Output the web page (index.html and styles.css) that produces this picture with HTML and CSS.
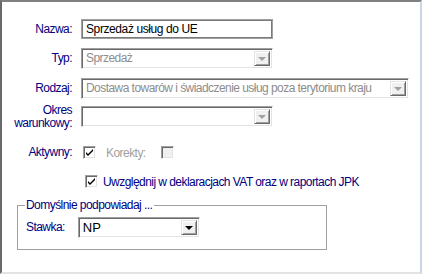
FILE: index.html
```html
<!DOCTYPE html>
<html lang="pl">
<head>
  <meta charset="UTF-8">
  <title>Rejestr VAT</title>
  <link rel="stylesheet" href="styles.css">
</head>
<body>
  <div class="window">
    <div class="row row-nazwa">
      <label class="label">Nazwa:</label>
      <div class="edit w-short">Sprzedaż usług do UE</div>
    </div>

    <div class="row row-typ">
      <label class="label">Typ:</label>
      <div class="combo disabled w-short">
        <span class="combo-text">Sprzedaż</span>
        <span class="combo-btn"><span class="arrow"></span></span>
      </div>
    </div>

    <div class="row row-rodzaj">
      <label class="label">Rodzaj:</label>
      <div class="combo disabled w-long">
        <span class="combo-text">Dostawa towarów i świadczenie usług poza terytorium kraju</span>
        <span class="combo-btn"><span class="arrow"></span></span>
      </div>
    </div>

    <div class="row row-okres">
      <label class="label two-line">Okres<br>warunkowy:</label>
      <div class="combo disabled w-short">
        <span class="combo-text"></span>
        <span class="combo-btn"><span class="arrow"></span></span>
      </div>
    </div>

    <div class="row row-aktywny">
      <label class="label">Aktywny:</label>
      <span class="check checked">
        <svg width="9" height="9" viewBox="0 0 9 9"><path d="M1 4 L3 6 L8 1 L8 3 L3 8 L1 6 Z" fill="#000"/></svg>
      </span>
      <span class="korekty">Korekty:</span>
      <span class="check greyed"></span>
    </div>

    <div class="row row-vat">
      <span class="check checked">
        <svg width="9" height="9" viewBox="0 0 9 9"><path d="M1 4 L3 6 L8 1 L8 3 L3 8 L1 6 Z" fill="#000"/></svg>
      </span>
      <span class="check-label">Uwzględnij w deklaracjach VAT oraz w raportach JPK</span>
    </div>

    <fieldset class="group">
      <legend>Domyślnie podpowiadaj ...</legend>
      <div class="row row-stawka">
        <label class="label label-stawka">Stawka:</label>
        <div class="combo w-stawka">
          <span class="combo-text big">NP</span>
          <span class="combo-btn"><span class="arrow"></span></span>
        </div>
      </div>
    </fieldset>
  </div>
</body>
</html>
```

FILE: styles.css
```css
* {
  margin: 0;
  padding: 0;
  box-sizing: border-box;
}
body {
  background: #fff;
  font-family: 'Liberation Sans', Arial, sans-serif;
  font-size: 12px;
  letter-spacing: -0.55px;
}
.window {
  width: 422px;
  height: 274px;
  background: #fff;
  border-top: 2px solid #808080;
  border-left: 2px solid #696969;
  border-right: 2px solid #c9d5e3;
  border-bottom: 2px solid #e3e3e3;
  padding-top: 17px;
  overflow: hidden;
}
.row {
  display: flex;
  align-items: center;
}
.label {
  width: 70px;
  margin-right: 9px;
  text-align: right;
  color: #000080;
  line-height: 13px;
}
.row-nazwa { height: 20px; }
.row-typ { height: 21px; margin-top: 9px; }
.row-rodzaj { height: 21px; margin-top: 9px; }
.row-okres { height: 21px; margin-top: 7px; }
.row-aktywny { height: 13px; margin-top: 19px; }
.row-vat { height: 13px; margin-top: 16px; padding-left: 81px; }

.edit {
  height: 20px;
  border: 1px solid #a0a0a0;
  box-shadow: inset 0 0 0 1px #7a7a7a;
  padding: 0 4px;
  line-height: 18px;
  font-size: 12px;
  letter-spacing: -0.4px;
  color: #000;
  white-space: nowrap;
}
.w-short { width: 192px; }
.w-long { width: 328px; }
.w-stawka { width: 122px; }

.combo {
  height: 21px;
  display: flex;
  border-top: 1px solid #a0a0a0;
  border-left: 1px solid #a0a0a0;
  border-bottom: 1px solid #fff;
  border-right: 1px solid #fff;
  box-shadow: inset 1px 1px #696969, inset -1px -1px #e3e3e3;
  padding: 2px;
  background: #fff;
}
.combo-text {
  flex: 1;
  padding-left: 2px;
  line-height: 15px;
  white-space: nowrap;
  overflow: hidden;
  color: #000;
}
.combo-text.big {
  font-size: 13px;
  letter-spacing: 0;
}
.disabled .combo-text {
  color: #8d8d8d;
}
.combo-btn {
  width: 16px;
  height: 15px;
  background: #f0f0f0;
  border-top: 1px solid #e3e3e3;
  border-left: 1px solid #e3e3e3;
  border-bottom: 1px solid #696969;
  border-right: 1px solid #696969;
  box-shadow: inset 1px 1px #fff, inset -1px -1px #a0a0a0;
  display: flex;
  align-items: center;
  justify-content: center;
}
.arrow {
  width: 0;
  height: 0;
  border-left: 4px solid transparent;
  border-right: 4px solid transparent;
  border-top: 4px solid #000;
  margin-top: 1px;
}
.disabled .arrow {
  border-top-color: #a0a0a0;
}

.check {
  width: 13px;
  height: 13px;
  border-top: 1px solid #a0a0a0;
  border-left: 1px solid #a0a0a0;
  border-bottom: 1px solid #fff;
  border-right: 1px solid #fff;
  box-shadow: inset 1px 1px #696969, inset -1px -1px #e3e3e3;
  background: #fff;
  display: flex;
  align-items: center;
  justify-content: center;
  margin-left: 2px;
}
.check svg {
  display: block;
}
.check.greyed {
  background: #f0f0f0;
  margin-left: 15px;
}
.korekty {
  margin-left: 10px;
  color: #a0a0a0;
}
.check-label {
  margin-left: 5px;
  color: #000080;
}

.group {
  margin: 11px 0 0 15px;
  width: 310px;
  height: 51px;
  border: 1px solid #a0a0a0;
  padding: 0;
}
.group legend {
  margin-left: 7px;
  padding: 0 2px 0 1px;
  color: #000080;
  line-height: 13px;
}
.row-stawka {
  height: 21px;
  margin-top: 5px;
}
.label-stawka {
  width: auto;
  text-align: left;
  margin-left: 8px;
  margin-right: 13px;
}
```
